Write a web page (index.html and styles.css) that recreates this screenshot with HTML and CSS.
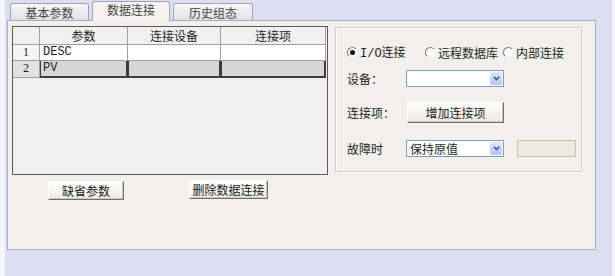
FILE: index.html
```html
<!DOCTYPE html>
<html lang="zh-CN">
<head>
  <meta charset="UTF-8">
  <title>数据连接</title>
  <link rel="stylesheet" href="styles.css">
</head>
<body>
  <div class="screen">
    <div class="tabs">
      <div class="tab tab-basic">基本参数</div>
      <div class="tab tab-data active">数据连接</div>
      <div class="tab tab-history">历史组态</div>
    </div>

    <div class="panel">
      <div class="left">
        <div class="grid">
          <div class="grid-row head">
            <div class="cell"></div>
            <div class="cell">参数</div>
            <div class="cell">连接设备</div>
            <div class="cell">连接项</div>
          </div>
          <div class="grid-row item">
            <div class="cell num">1</div>
            <div class="cell mono">DESC</div>
            <div class="cell"></div>
            <div class="cell"></div>
          </div>
          <div class="grid-row item sel">
            <div class="cell num">2</div>
            <div class="cell mono">PV</div>
            <div class="cell"></div>
            <div class="cell"></div>
          </div>
        </div>
        <div class="actions">
          <button class="btn btn-default">缺省参数</button>
          <button class="btn btn-delete">删除数据连接</button>
        </div>
      </div>

      <div class="group">
        <div class="radios">
          <div class="radio"><span class="dot checked"></span><span><span class="mono">I/O</span>连接</span></div>
          <div class="radio"><span class="dot"></span><span>远程数据库</span></div>
          <div class="radio"><span class="dot"></span><span>内部连接</span></div>
        </div>

        <div class="field field-device">
          <label>设备：</label>
          <div class="select">
            <span class="value"></span>
            <span class="arrow">
              <svg width="7" height="5" viewBox="0 0 7 5"><path d="M0.8 0.8 L3.5 3.6 L6.2 0.8" fill="none" stroke="#3d5a8c" stroke-width="1.6"/></svg>
            </span>
          </div>
        </div>

        <div class="field field-item">
          <label>连接项：</label>
          <button class="btn btn-add">增加连接项</button>
        </div>

        <div class="field field-fault">
          <label>故障时</label>
          <div class="select">
            <span class="value">保持原值</span>
            <span class="arrow">
              <svg width="7" height="5" viewBox="0 0 7 5"><path d="M0.8 0.8 L3.5 3.6 L6.2 0.8" fill="none" stroke="#3d5a8c" stroke-width="1.6"/></svg>
            </span>
          </div>
          <div class="textbox"></div>
        </div>
      </div>
    </div>
  </div>
</body>
</html>
```

FILE: styles.css
```css
* {
  box-sizing: border-box;
}
body {
  margin: 0;
  background: #dcdff0;
  font: 12px "Noto Sans CJK SC", sans-serif;
  color: #1e1e1e;
}
.screen {
  width: 615px;
  height: 276px;
  border-left: 5px solid #f4f5fb;
  border-right: 3px solid #f4f5fb;
  padding-left: 2px;
}
.mono {
  font-family: "Liberation Mono", "Noto Sans CJK SC", monospace;
}

/* tabs */
.tabs {
  display: flex;
  align-items: flex-end;
  gap: 3px;
  height: 20px;
  padding-left: 3px;
}
.tab {
  height: 17px;
  border: 1px solid #9fa5bb;
  border-bottom: 0;
  border-radius: 3px 3px 0 0;
  background: linear-gradient(#f7f7f9, #e1e1e7);
  text-align: center;
  line-height: 17px;
  color: #444;
}
.tab-basic { width: 79px; }
.tab-data { width: 78px; }
.tab-history { width: 80px; }
.tab.active {
  position: relative;
  height: 20px;
  margin-bottom: -1px;
  background: #f4f3f0;
  line-height: 15px;
}

/* panel */
.panel {
  display: flex;
  width: 589px;
  height: 230px;
  border: 1px solid #a4abc4;
  background: #f1f0ec;
  padding: 5px 0 0 4px;
}
.left {
  width: 316px;
}
.grid {
  height: 149px;
  border: 1px solid #5a5a5a;
  background: #f0f0f0;
}
.grid-row {
  display: grid;
  grid-template-columns: 27px 88px 93px 105px;
}
.cell {
  border-right: 1px solid #a0a0a0;
  border-bottom: 1px solid #a0a0a0;
  padding-left: 3px;
  white-space: nowrap;
  overflow: hidden;
}
.head .cell {
  height: 18px;
  line-height: 17px;
  text-align: center;
  padding-left: 0;
}
.item .cell {
  height: 16px;
  line-height: 15px;
  background: #fff;
}
.item .num {
  background: #f4f4f4;
  text-align: center;
  padding-left: 0;
  font-family: "Liberation Serif", serif;
}
.item.sel .cell {
  height: 17px;
  background: #d6d6d6;
  border-right: 1px solid #3c3c3c;
  border-bottom: 2px solid #3c3c3c;
  box-shadow: inset 1px 0 #3c3c3c, inset -1px 0 #3c3c3c;
}
.item.sel .num {
  background: #e2e2e2;
  border-right: 1px solid #a0a0a0;
  border-bottom: 1px solid #a0a0a0;
  box-shadow: none;
}

/* buttons */
.btn {
  font: inherit;
  color: #222;
  padding: 0;
  height: 19px;
  border: 1px solid;
  border-color: #fdfdfd #6f6f6f #6f6f6f #fdfdfd;
  background: linear-gradient(#fdfdfd, #ecebe6);
  box-shadow: inset -1px -1px #c9c8c2;
}
.actions {
  display: flex;
  margin-top: 6px;
  padding-left: 36px;
}
.btn-default {
  width: 76px;
}
.btn-delete {
  width: 79px;
  margin-left: 65px;
  margin-top: -1px;
}

/* group box */
.group {
  width: 247px;
  height: 145px;
  margin: 1px 0 0 7px;
  border: 1px solid #cfcdc4;
  box-shadow: inset 1px 1px #fff, 1px 1px #fff;
  padding: 15px 0 0 11px;
}
.radios {
  display: grid;
  grid-template-columns: 78px 78px auto;
  height: 14px;
}
.radio {
  display: flex;
  align-items: center;
  gap: 2px;
  white-space: nowrap;
}
.dot {
  width: 11px;
  height: 11px;
  border-radius: 50%;
  border: 1px solid;
  border-color: #7a7a7a #f8f8f8 #f8f8f8 #7a7a7a;
  background: #fbfbfb;
  display: flex;
  align-items: center;
  justify-content: center;
}
.dot.checked::after {
  content: "";
  width: 5px;
  height: 5px;
  border-radius: 50%;
  background: #111;
}
.field {
  display: flex;
  align-items: center;
}
.field label {
  width: 59px;
}
.field-device {
  margin-top: 13px;
}
.field-item {
  margin-top: 15px;
}
.field-fault {
  margin-top: 17px;
}
.btn-add {
  width: 97px;
  height: 21px;
  margin-left: 1px;
}
.select {
  display: flex;
  align-items: center;
  justify-content: space-between;
  width: 98px;
  height: 17px;
  border: 1px solid #7f9db9;
  background: #fff;
  padding: 1px;
}
.select .value {
  padding-left: 2px;
  line-height: 14px;
}
.arrow {
  display: flex;
  align-items: center;
  justify-content: center;
  width: 12px;
  height: 13px;
  border-radius: 2px;
  background: linear-gradient(#dfe7fb, #b3c6f3);
}
.textbox {
  width: 59px;
  height: 17px;
  margin-left: 13px;
  border: 1px solid #c3c2b7;
  background: #efeadc;
}
```
